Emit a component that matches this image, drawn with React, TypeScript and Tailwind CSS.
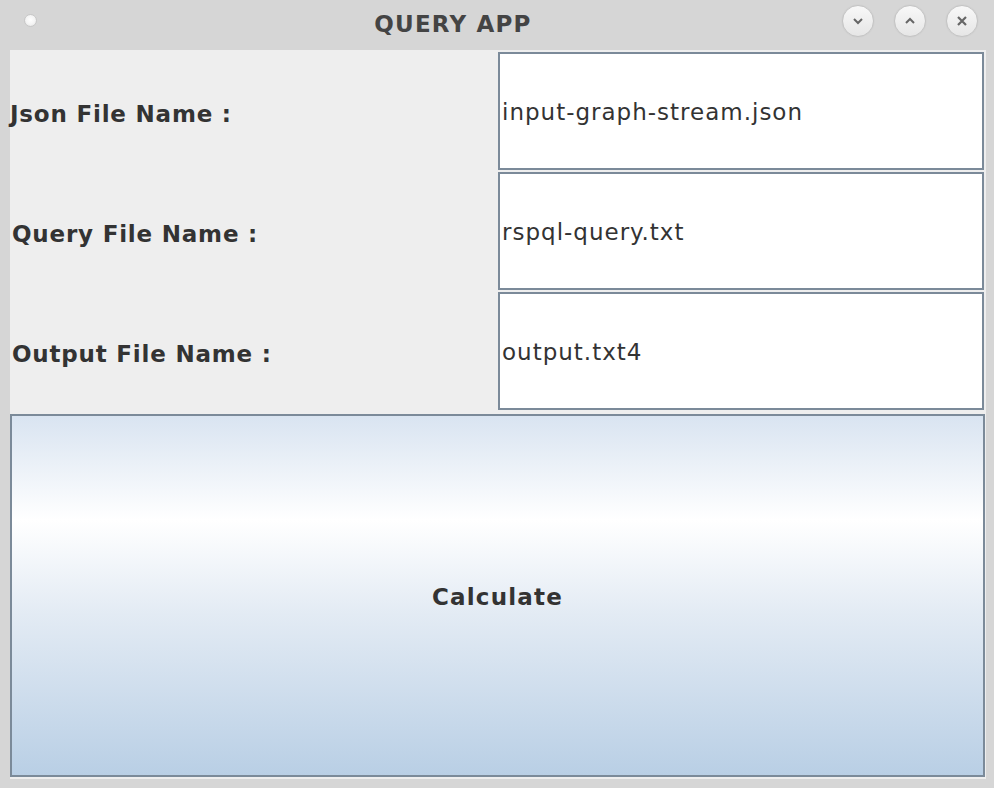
import React from "react";

const fields = [
  { label: "Json File Name :", value: "input-graph-stream.json", indent: "pl-0" },
  { label: "Query File Name :", value: "rspql-query.txt", indent: "pl-[2px]" },
  { label: "Output File Name :", value: "output.txt4", indent: "pl-[2px]" },
];

function WindowButton({ children }: { children: React.ReactNode }) {
  return (
    <div className="flex h-[32px] w-[32px] items-center justify-center rounded-full border border-[#c4c4c4] bg-[linear-gradient(180deg,#f8f8f8_0%,#e6e6e6_100%)] shadow-[0_0_1px_#bdbdbd]">
      {children}
    </div>
  );
}

function TitleBar() {
  return (
    <div className="relative flex h-[50px] items-center justify-center">
      <div className="absolute left-[24px] top-[14px] h-[13px] w-[13px] rounded-full border border-[#c8c8c8] bg-[radial-gradient(circle_at_50%_45%,#ffffff_0%,#f4f4f4_55%,#dcdcdc_100%)]" />
      <span className="-mt-[2px] pr-[88px] text-[23px] font-bold leading-none tracking-[1.2px] text-[#444444]">
        QUERY APP
      </span>
      <div className="absolute right-[16px] top-[5px] flex gap-[20px]">
        <WindowButton>
          <svg width="16" height="16" viewBox="0 0 16 16">
            <path d="M4 6 L8 10 L12 6" fill="none" stroke="#666" strokeWidth="2" />
          </svg>
        </WindowButton>
        <WindowButton>
          <svg width="16" height="16" viewBox="0 0 16 16">
            <path d="M4 10 L8 6 L12 10" fill="none" stroke="#666" strokeWidth="2" />
          </svg>
        </WindowButton>
        <WindowButton>
          <svg width="16" height="16" viewBox="0 0 16 16">
            <path d="M4 4 L12 12 M12 4 L4 12" fill="none" stroke="#666" strokeWidth="2.2" />
          </svg>
        </WindowButton>
      </div>
    </div>
  );
}

export default function App() {
  return (
    <div className="flex h-[788px] w-[994px] flex-col bg-[#d6d6d6] font-['DejaVu_Sans',sans-serif] text-[#333333]">
      <TitleBar />
      <div className="mx-[8px] ml-[10px] flex h-[729px] flex-col bg-[#eeeeee]">
        <div className="grid grid-cols-2 pt-[1px]">
          {fields.map((f) => (
            <React.Fragment key={f.label}>
              <div
                className={`flex h-[120px] items-center pt-[6px] ${f.indent} text-[23px] font-bold tracking-[0.8px]`}
              >
                {f.label}
              </div>
              <div className="flex h-[120px] py-[1px] pr-[2px]">
                <div className="flex flex-1 items-center border-2 border-[#7b8a99] bg-white pl-[2px] pt-[2px] text-[23px] tracking-[1px]">
                  {f.value}
                </div>
              </div>
            </React.Fragment>
          ))}
        </div>
        <button className="mb-[2px] mr-[1px] mt-[3px] flex h-[363px] items-center justify-center border-2 border-[#7b8a99] bg-[linear-gradient(180deg,#d9e4f1_0%,#ffffff_29%,#e3ebf4_55%,#b9cfe5_100%)] pt-[3px] text-[23px] font-bold tracking-[1.2px] text-[#333333]">
          Calculate
        </button>
      </div>
    </div>
  );
}
